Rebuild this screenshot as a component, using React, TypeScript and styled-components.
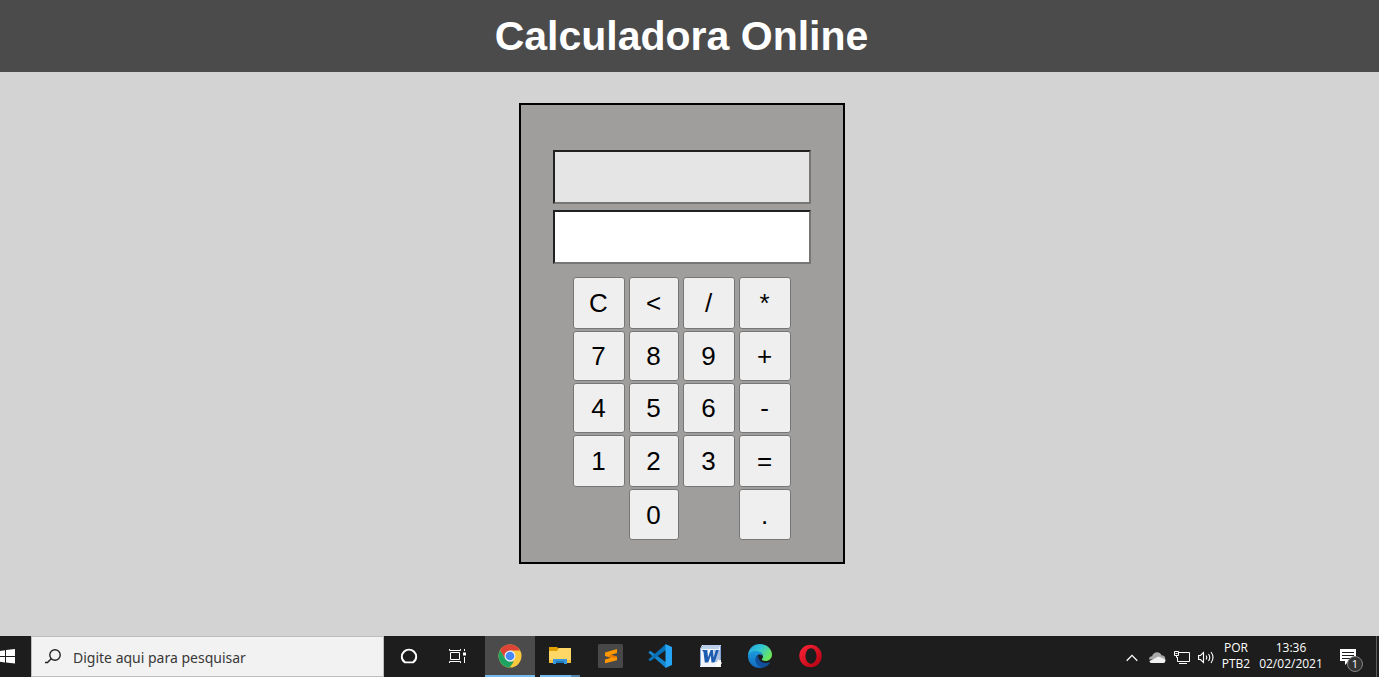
import React, { useState } from "react";
import styled, { createGlobalStyle } from "styled-components";

const GlobalStyle = createGlobalStyle`
  *, *::before, *::after { box-sizing: border-box; }
  body {
    margin: 0;
    background: #d3d3d3;
    font-family: "Liberation Sans", Arial, sans-serif;
  }
`;

const Page = styled.div`
  min-height: 100vh;
  display: flex;
  flex-direction: column;
`;

const Header = styled.header`
  display: flex;
  align-items: center;
  justify-content: center;
  height: 72px;
  padding-right: 16px;
  background: #4b4b4b;
`;

const Title = styled.h1`
  margin: 0;
  color: #fff;
  font-size: 41px;
  line-height: 48px;
  font-weight: 700;
`;

const Main = styled.main`
  flex: 1;
  display: flex;
  justify-content: center;
  align-items: flex-start;
  padding: 31px 16px 31px 0;
`;

const Calculator = styled.form`
  display: flex;
  flex-direction: column;
  align-items: center;
  gap: 6px;
  padding: 45px 32px 22px;
  border: 2px solid #000;
  background: #9f9e9c;
`;

const Display = styled.input`
  width: 258px;
  height: 54px;
  padding: 0 8px;
  border: 2px solid;
  border-color: #212121 #767676 #767676 #212121;
  border-radius: 0;
  background: #fff;
  font: 26px "Liberation Sans", Arial, sans-serif;
  text-align: right;
  outline: none;

  &:disabled {
    background: #e5e5e5;
    color: #545454;
  }
`;

const Keypad = styled.div`
  display: grid;
  grid-template-columns: 52px 50px 52px 52px;
  grid-template-rows: 51px 50px 50px 52px 52px;
  column-gap: 4px;
  row-gap: 2px;
  grid-template-rows: 52px 50px 50px 52px 51px;
  padding-top: 7px;
`;

const Key = styled.button<{ $column?: number }>`
  grid-column: ${(p) => p.$column ?? "auto"};
  padding: 1px 0 0;
  border: 1px solid #767676;
  border-radius: 3px;
  background: #efefef;
  color: #000;
  font: 26px "Liberation Sans", Arial, sans-serif;
`;

const Taskbar = styled.footer`
  display: flex;
  height: 41px;
  background: #1d1d1d;
  color: #fff;
  font-family: "Open Sans", "Noto Sans", sans-serif;
`;

const StartButton = styled.button`
  display: flex;
  align-items: center;
  width: 31px;
  padding: 0;
  border: 0;
  background: transparent;
`;

const Search = styled.label`
  display: flex;
  align-items: center;
  gap: 11px;
  width: 353px;
  padding-left: 13px;
  border: 1px solid #bdbdbd;
  background: #f2f2f2;
`;

const SearchInput = styled.input`
  flex: 1;
  min-width: 0;
  height: 22px;
  padding: 2px 0 0;
  border: 0;
  background: transparent;
  font: 14px "Noto Sans", "Open Sans", sans-serif;
  outline: none;

  &::placeholder {
    color: #383838;
    opacity: 1;
  }
`;

const TaskButton = styled.button<{ $active?: boolean }>`
  display: flex;
  align-items: center;
  justify-content: center;
  width: 50px;
  padding: 0;
  border: 0;
  border-bottom: 2px solid ${(p) => (p.$active ? "#76b9ed" : "transparent")};
  background: ${(p) => (p.$active ? "#4b4b4b" : "transparent")};
`;

const GroupedTaskButton = styled(TaskButton)`
  padding-bottom: 2px;
  border-bottom: 0;
  background: linear-gradient(
      to right,
      transparent 5px,
      #76b9ed 5px,
      #76b9ed 36px,
      #5685a9 36px,
      #5685a9 45px,
      transparent 45px
    )
    bottom / 100% 2px no-repeat;
`;

const SystemButtons = styled.div`
  display: flex;
  margin-right: 3px;
`;

const SystemButton = styled(TaskButton)`
  width: 49px;
`;

const Tray = styled.div`
  display: flex;
  align-items: center;
  margin-left: auto;
`;

const TrayButton = styled.button<{ $width: number }>`
  display: flex;
  align-items: center;
  justify-content: center;
  width: ${(p) => p.$width}px;
  height: 100%;
  padding: 2px 0 0;
  border: 0;
  background: transparent;
`;

const NotificationButton = styled(TrayButton)`
  padding-right: 8px;
`;

const TrayText = styled.button<{ $width: number }>`
  display: flex;
  flex-direction: column;
  align-items: center;
  width: ${(p) => p.$width}px;
  height: 100%;
  padding: 4px 0 0;
  border: 0;
  background: transparent;
  color: #fff;
  font: 12px/16px "Open Sans", "Noto Sans", sans-serif;
`;

const ShowDesktop = styled.button`
  width: 3px;
  height: 100%;
  padding: 0;
  border: 0;
  border-left: 1px solid #5c5c5c;
  background: transparent;
`;

const Icon = styled.svg`
  display: block;
  flex: none;
`;

const WindowsIcon = () => (
  <Icon width="16" height="16" viewBox="0 0 16 16" fill="#fff">
    <path d="M0 2 5 1.300V7H0zM6 1.100 15 0V7H6zM0 8H5V13.400L0 12.700zM6 8H15V14.500L6 13.500z" />
  </Icon>
);

const SearchIcon = () => (
  <Icon width="17" height="16" viewBox="0 0 17 16" fill="none" stroke="#222" strokeWidth="1.4">
    <circle cx="10" cy="6" r="5.2" />
    <path d="M6.2 9.800 2.500 13.500H0" />
  </Icon>
);

const CortanaIcon = () => (
  <Icon width="18" height="16" viewBox="0 0 18 16" fill="none" stroke="#fff" strokeWidth="1.9">
    <path d="M5 14.400C2.800 13 1.800 11 1.800 8.800A7.200 7.200 0 0 1 16.200 8.800C16.200 11 15.200 13 13 14.400Z" />
  </Icon>
);

const TaskViewIcon = () => (
  <Icon width="17" height="16" viewBox="0 0 17 16" fill="none" stroke="#fff">
    <path d="M1.500 4.500h9v7h-9zM.5 1v1.500h11V1M.5 15v-1.500h11V15M15.500 1v2M15.500 9v6" />
    <path d="M14 4.500h3v3h-3z" fill="#fff" stroke="none" />
  </Icon>
);

const ChromeIcon = () => (
  <Icon width="24" height="24" viewBox="0 0 24 24">
    <circle cx="12" cy="12" r="11.5" fill="#fbc93d" />
    <path d="M2 6.300A11.500 11.500 0 0 1 22 6.500H12L7.200 14.700z" fill="#db4437" />
    <path d="M2 6.300 7.200 14.800 12 17.500H16L11.500 23.500A11.500 11.500 0 0 1 2 6.300z" fill="#1da462" />
    <circle cx="12" cy="12" r="5.5" fill="#e8efff" />
    <circle cx="12" cy="12" r="4.3" fill="#4587f4" />
  </Icon>
);

const FolderIcon = () => (
  <Icon width="22" height="18" viewBox="0 0 22 18">
    <path d="M0 0h8l1 1h13v4H0z" fill="#e0a100" />
    <path d="M0 4h8l2-3h12v15H0z" fill="#ffd767" />
    <path d="M0 13h22v3H0z" fill="#f3bd3d" />
    <path d="M4 12h14v5h-3v-2H7v2H4z" fill="#3896df" />
    <path d="M7 14h8v2H7z" fill="#1979ba" />
  </Icon>
);

const SublimeIcon = () => (
  <Icon width="25" height="24" viewBox="0 0 25 24">
    <rect width="25" height="24" rx="1.5" fill="#484848" />
    <path d="M7 8.400 19 5V9L12.800 10.800 19 12.700V16.200L7 19.300V15.600L13 13.800 7 12z" fill="#ff9800" />
    <path d="M12.800 10.800 19 12.700 18 14 10 12.900z" fill="#e87900" />
  </Icon>
);

const VSCodeIcon = () => (
  <Icon width="24" height="24" viewBox="0 0 24 24">
    <path d="M.3 8.500 2.200 6.800 18 18.200V24z" fill="#1587cf" />
    <path d="M.3 15.500 2.200 17.200 18 6V0z" fill="#0872b8" />
    <path d="M17.500 0 24 3V21L17.500 24z" fill="#27a4f3" />
  </Icon>
);

const WordIcon = () => (
  <Icon width="23" height="22" viewBox="0 0 23 22">
    <path d="M3 0H22V22H1V4z" fill="#f1f5fb" />
    <path d="M1.500 21V4L4 1H21.500V15" fill="none" stroke="#7fa3d6" />
    <path d="M4 1.500H20V4H3z" fill="#bdd1ed" />
    <path d="M15 5h6v12h-5z" fill="#a9bfdf" />
    <path d="M3 5H8.300L9 12.500 11.600 5H14L14.600 12.500 17 5H19.800L15.500 17.500H12.500L11.800 10.500 9.200 17.500H5.800L4.500 7z" fill="#1c5cb0" />
    <path d="M19 14l4 4-4 4h-2z" fill="#fff" />
  </Icon>
);

const EdgeIcon = () => (
  <Icon width="24" height="24" viewBox="0 0 24 24">
    <defs>
      <linearGradient id="edgeTop" x1="0" y1="0" x2="1" y2="0.55">
        <stop offset="0" stopColor="#279ee1" />
        <stop offset=".5" stopColor="#31c5d5" />
        <stop offset="1" stopColor="#6be75a" />
      </linearGradient>
      <linearGradient id="edgeSide" x1="0" y1="0" x2="0" y2="1">
        <stop offset="0" stopColor="#1b9bdc" />
        <stop offset="1" stopColor="#1369bd" />
      </linearGradient>
    </defs>
    <path d="M0 11C.5 4.500 5.500 0 12 0c7 0 12 5 12 10.500 0 4-3 6.500-6.500 6.500-3 0-4-1.200-3.500-2 2.500-2.500.5-7-4.500-7-4 0-7.500 2-9.500 3z" fill="url(#edgeTop)" />
    <path d="M0 11C2 7.500 5.500 6.500 9 7c3.500.5 6 3 6 5.500-1-1.500-3-2.500-5-1.500-3.500 2-2.500 9 5 12.500C7 25.500-.5 20 0 11z" fill="url(#edgeSide)" />
    <path d="M10 11c-5 3-2.500 11 4.500 12.700 3.500-.5 6.500-2.700 8-5.700-4 2.500-12.500 1-12.500-7z" fill="#104f9b" />
  </Icon>
);

const OperaIcon = () => (
  <Icon width="24" height="24" viewBox="0 0 24 24">
    <defs>
      <linearGradient id="operaRing" x1="0" y1="0" x2="1" y2="1">
        <stop offset="0" stopColor="#ff2638" />
        <stop offset="1" stopColor="#b00010" />
      </linearGradient>
    </defs>
    <path fillRule="evenodd" d="M12.500.8a11.200 11.200 0 1 0 0 22.400A11.200 11.200 0 0 0 12.500.8zM13 4.300c3.200 0 5.500 3.500 5.500 7.800s-2.300 7.600-5.500 7.600-5.500-3.300-5.500-7.600S9.800 4.300 13 4.300z" fill="url(#operaRing)" />
  </Icon>
);

const ChevronIcon = () => (
  <Icon width="12" height="8" viewBox="0 0 12 8" fill="none" stroke="#fff" strokeWidth="1.3">
    <path d="M.7 6.800 6 1.400 11.300 6.800" />
  </Icon>
);

const CloudIcon = () => (
  <Icon width="17" height="11" viewBox="0 0 17 11">
    <path d="M0 7.500Q0 4.500 3 4.200C4.500-.8 11-1 12.500 3.300 15 3.300 16.300 5 16.300 7z" fill="#a9a9a9" />
    <path d="M.5 9 9.500 4.500 16.500 7.500c0 2-.5 3.500-2 3.500H2.500C1.200 11 .5 10 .5 9z" fill="#f1f1f1" />
  </Icon>
);

const MonitorIcon = () => (
  <Icon width="17" height="13" viewBox="0 0 17 13" fill="none" stroke="#fff">
    <path d="M5 1.500H15.500V10.500H3.500V6M5 12.500H13M.5.500H4.500V4.500H.5zM2.500 4.500V6.500H4" />
    <path d="M1.500 2.500h2" />
  </Icon>
);

const SpeakerIcon = () => (
  <Icon width="17" height="13" viewBox="0 0 17 13" fill="none" stroke="#fff" strokeWidth="1.100">
    <path d="M.6 4.500H2.500L5.500 1.500V11.500L2.500 8.500H.6zM8 4.500Q9.500 6.500 8 8.500M10.500 3Q13 6.500 10.500 10M13 1Q17 6.500 13 12" />
  </Icon>
);

const NotificationMark = styled.span`
  position: relative;
  display: block;
  width: 16px;
  height: 18px;
`;

const NotificationCount = styled.span`
  position: absolute;
  left: 7px;
  top: 7px;
  width: 16px;
  height: 16px;
  border: 1px solid #858585;
  border-radius: 50%;
  background: #343434;
  color: #fff;
  font: 11px/14px "Open Sans", "Noto Sans", sans-serif;
  text-align: center;
`;

const NotificationIcon = () => (
  <Icon width="16" height="16" viewBox="0 0 16 16">
    <path d="M0 0h16v12H9l-4 4v-4H0z" fill="#fff" />
    <path d="M2 3.500h12M2 6.500h12M2 9.500h8" stroke="#1d1d1d" />
  </Icon>
);

const keys: { label: string; column?: number }[] = [
  ..."C</*789+456-123=".split("").map((label) => ({ label })),
  { label: "0", column: 2 },
  { label: ".", column: 4 },
];

const apps = [
  { name: "Sublime Text", Art: SublimeIcon },
  { name: "Visual Studio Code", Art: VSCodeIcon },
  { name: "Word", Art: WordIcon },
  { name: "Edge", Art: EdgeIcon },
  { name: "Opera", Art: OperaIcon },
];

const compute = (a: number, op: string, b: number) => {
  if (op === "+") return a + b;
  if (op === "-") return a - b;
  if (op === "*") return a * b;
  return a / b;
};

export default function App() {
  const [history, setHistory] = useState("");
  const [entry, setEntry] = useState("");

  const press = (key: string) => {
    if (key === "C") {
      setHistory("");
      setEntry("");
    } else if (key === "<") {
      setEntry(entry.slice(0, -1));
    } else if (key === "=") {
      const op = history.slice(-1);
      if (!op || !entry) return;
      setEntry(String(compute(Number(history.slice(0, -1)), op, Number(entry))));
      setHistory("");
    } else if ("+-*/".includes(key)) {
      if (!entry) return;
      setHistory(entry + key);
      setEntry("");
    } else {
      setEntry(entry + key);
    }
  };

  return (
    <Page>
      <GlobalStyle />
      <Header>
        <Title>Calculadora Online</Title>
      </Header>
      <Main>
        <Calculator onSubmit={(e) => e.preventDefault()}>
          <Display aria-label="Histórico" value={history} disabled />
          <Display aria-label="Valor" value={entry} onChange={(e) => setEntry(e.target.value)} />
          <Keypad>
            {keys.map(({ label, column }) => (
              <Key key={label} type="button" $column={column} onClick={() => press(label)}>
                {label}
              </Key>
            ))}
          </Keypad>
        </Calculator>
      </Main>
      <Taskbar>
        <StartButton aria-label="Iniciar">
          <WindowsIcon />
        </StartButton>
        <Search>
          <SearchIcon />
          <SearchInput aria-label="Pesquisar" placeholder="Digite aqui para pesquisar" />
        </Search>
        <SystemButtons>
          <SystemButton aria-label="Cortana">
            <CortanaIcon />
          </SystemButton>
          <SystemButton aria-label="Visão de tarefas">
            <TaskViewIcon />
          </SystemButton>
        </SystemButtons>
        <TaskButton $active aria-label="Chrome">
          <ChromeIcon />
        </TaskButton>
        <GroupedTaskButton aria-label="Explorador de Arquivos">
          <FolderIcon />
        </GroupedTaskButton>
        {apps.map(({ name, Art }) => (
          <TaskButton key={name} aria-label={name}>
            <Art />
          </TaskButton>
        ))}
        <Tray>
          <TrayButton $width={24} aria-label="Mostrar ícones ocultos">
            <ChevronIcon />
          </TrayButton>
          <TrayButton $width={26} aria-label="OneDrive">
            <CloudIcon />
          </TrayButton>
          <TrayButton $width={24} aria-label="Rede">
            <MonitorIcon />
          </TrayButton>
          <TrayButton $width={24} aria-label="Volume">
            <SpeakerIcon />
          </TrayButton>
          <TrayText $width={36}>
            <span>POR</span>
            <span>PTB2</span>
          </TrayText>
          <TrayText $width={74}>
            <span>13:36</span>
            <span>02/02/2021</span>
          </TrayText>
          <NotificationButton $width={48} aria-label="Notificações">
            <NotificationMark>
              <NotificationIcon />
              <NotificationCount>1</NotificationCount>
            </NotificationMark>
          </NotificationButton>
          <ShowDesktop aria-label="Mostrar área de trabalho" />
        </Tray>
      </Taskbar>
    </Page>
  );
}
